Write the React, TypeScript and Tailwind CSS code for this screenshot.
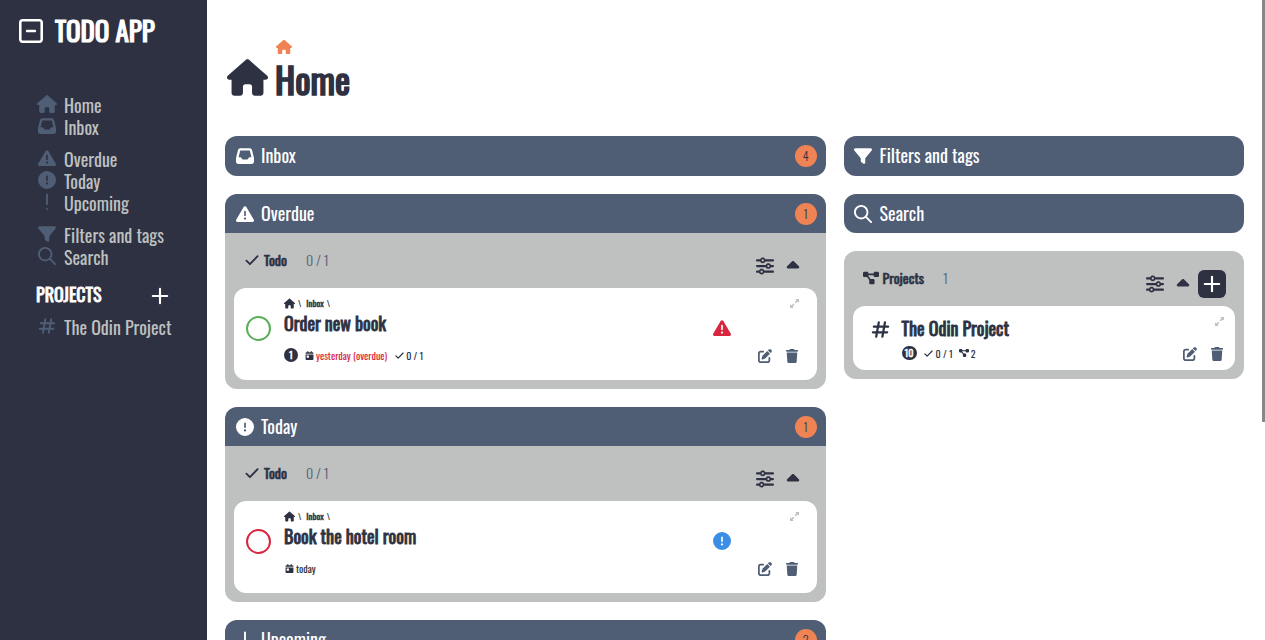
import type { ReactNode } from "react";
import {
  FaCalendarDay,
  FaCaretUp,
  FaCircleExclamation,
  FaDiagramProject,
  FaFilter,
  FaHouse,
  FaInbox,
  FaPenToSquare,
  FaRegSquareMinus,
  FaSliders,
  FaTrash,
  FaTriangleExclamation,
  FaUpRightAndDownLeftFromCenter,
} from "react-icons/fa6";

const strong = "[-webkit-text-stroke:0.045em_currentColor]";

function Thin({ d, width = 2.1, className }: { d: string; width?: number; className: string }) {
  return (
    <svg
      viewBox="0 0 20 20"
      fill="none"
      stroke="currentColor"
      strokeWidth={width}
      strokeLinecap="round"
      strokeLinejoin="round"
      className={className}
      aria-hidden="true"
    >
      <path d={d} />
    </svg>
  );
}

const paths = {
  search: "M15 8a7 7 0 1 1-14 0a7 7 0 0 1 14 0zM13 13L19 19",
  bang: "M10 1.500V12.500M10 17.800v.01",
  hash: "M8.200 2.500L5.500 17.500M14.700 2.500L12 17.500M3 7h15M2 13h15",
  check: "M2 11l5 5L18 4.500",
  plus: "M10 2v16M2 10h16",
};

function NavLink({ icon, children }: { icon: ReactNode; children: ReactNode }) {
  return (
    <li>
      <a href="#" className="flex h-[22px] items-center gap-[7px] text-lg/[22px] text-[#bfc0c0]">
        <span className="flex w-5 justify-center pb-0.5 text-[#4f5d75]">{icon}</span>
        {children}
      </a>
    </li>
  );
}

type BarProps = { icon: ReactNode; title: string; count?: number; slim?: boolean; open?: boolean };

function Bar({ icon, title, count, slim, open }: BarProps) {
  return (
    <h2
      className={`flex items-center gap-[7px] bg-[#4f5d75] pr-[9px] pl-2.5 text-lg text-white ${
        slim ? "h-[39px]" : "h-10"
      } ${open ? "rounded-t-xl" : "rounded-xl"}`}
    >
      <span className="flex w-[19px] justify-center">{icon}</span>
      <span className="pb-0.5">{title}</span>
      {count !== undefined && (
        <span className="ml-auto flex size-[22px] items-center justify-center rounded-full bg-[#ef8354] text-xs font-light text-[#2d3142]">
          {count}
        </span>
      )}
    </h2>
  );
}

function ListHead({ icon, title, count, add }: { icon: ReactNode; title: string; count: string; add?: boolean }) {
  return (
    <div className="flex h-[55px] items-center pr-[9px]">
      <div className="flex items-center pb-px">
        {icon}
        <h3 className={`text-sm ${strong}`}>{title}</h3>
        <span className="ml-[19px] text-sm font-light text-[#4f5d75]">{count}</span>
      </div>
      <div className="ml-auto flex items-center gap-[11px] pt-2.5">
        <button aria-label="Options">
          <FaSliders className="size-[18px]" />
        </button>
        <button aria-label="Collapse" className={add ? "-mr-1" : "mr-[7px]"}>
          <FaCaretUp className="h-5 w-4" />
        </button>
        {add && (
          <button aria-label="Add project" className="flex size-7 items-center justify-center rounded-md bg-[#2d3142] text-white">
            <Thin d={paths.plus} width={2.4} className="size-[18px]" />
          </button>
        )}
      </div>
    </div>
  );
}

function Actions() {
  return (
    <div className="flex flex-col items-end justify-between">
      <button aria-label="Expand" className="pt-px text-[#bfc0c0]">
        <FaUpRightAndDownLeftFromCenter className="size-[9px]" />
      </button>
      <div className="flex gap-[13px] text-[#4f5d75]">
        <button aria-label="Edit">
          <FaPenToSquare className="size-3.5" />
        </button>
        <button aria-label="Delete">
          <FaTrash className="size-3.5" />
        </button>
      </div>
    </div>
  );
}

function TaskPanel(props: {
  icon: ReactNode;
  title: string;
  task: string;
  ring: string;
  status: ReactNode;
  meta: ReactNode;
}) {
  return (
    <section>
      <Bar icon={props.icon} title={props.title} count={1} slim open />
      <div className="rounded-b-xl bg-[#bfc0c0] px-[9px] pb-[9px]">
        <ListHead
          icon={<Thin d={paths.check} width={2.6} className="mr-[5px] ml-[11px] size-3.5" />}
          title="Todo"
          count="0 / 1"
        />
        <article className="flex rounded-xl bg-white pt-2.5 pr-[18px] pb-[17px] pl-3">
          <input
            type="checkbox"
            aria-label={props.task}
            className={`mt-[18px] mr-[13px] size-[25px] appearance-none rounded-full border-2 ${props.ring}`}
          />
          <div className="flex flex-1 flex-col">
            <nav className="flex h-2.5 items-center gap-[3px] text-[9px]/[10px]">
              <FaHouse className="size-[11px]" />
              <span>\</span>
              <a href="#" className={`pl-0.5 ${strong}`}>
                Inbox
              </a>
              <span>\</span>
            </nav>
            <h4 className={`mt-[3px] flex h-6 items-center text-lg/6 ${strong}`}>{props.task}</h4>
            <div className="mt-3 flex h-4 items-center text-[10px]">{props.meta}</div>
          </div>
          <span className="pt-[21px] pr-[27px]">{props.status}</span>
          <Actions />
        </article>
      </div>
    </section>
  );
}

function Pill({ children }: { children: ReactNode }) {
  return (
    <span className={`mr-[7px] flex h-3.5 min-w-3.5 items-center justify-center rounded-full bg-[#2d3142] px-[3px] text-[10px]/[14px] text-white ${strong}`}>
      {children}
    </span>
  );
}

export default function App() {
  return (
    <div className="flex h-screen bg-white font-['Oswald',sans-serif] text-[#2d3142]">
      <aside className="w-[207px] shrink-0 bg-[#2d3142]">
        <header className="flex h-[62px] items-center gap-3 pl-[19px] text-white">
          <button aria-label="Close menu">
            <FaRegSquareMinus className="h-7 w-6" />
          </button>
          <h1 className={`pb-0.5 text-[27px] ${strong}`}>TODO APP</h1>
        </header>
        <nav className="mt-8 pl-[37px]">
          <ul>
            <NavLink icon={<FaHouse className="size-5" />}>Home</NavLink>
            <NavLink icon={<FaInbox className="size-[18px]" />}>Inbox</NavLink>
          </ul>
          <ul className="mt-2.5">
            <NavLink icon={<FaTriangleExclamation className="size-[18px]" />}>Overdue</NavLink>
            <NavLink icon={<FaCircleExclamation className="size-[18px]" />}>Today</NavLink>
            <NavLink icon={<Thin d={paths.bang} className="size-[18px]" />}>Upcoming</NavLink>
          </ul>
          <ul className="mt-2.5">
            <NavLink icon={<FaFilter className="size-[18px]" />}>Filters and tags</NavLink>
            <NavLink icon={<Thin d={paths.search} className="size-[18px]" />}>Search</NavLink>
          </ul>
          <div className="mt-3.5 mb-2.5 -ml-px flex h-6 items-center justify-between pr-[38px] text-lg text-white">
            <h2 className={strong}>PROJECTS</h2>
            <button aria-label="Add project" className="pt-[3px]">
              <Thin d={paths.plus} width={2.4} className="size-[18px]" />
            </button>
          </div>
          <ul>
            <NavLink icon={<Thin d={paths.hash} className="size-[18px]" />}>The Odin Project</NavLink>
          </ul>
        </nav>
      </aside>

      <main className="flex-1 overflow-y-auto px-[18px] pt-9 [scrollbar-width:none]">
        <header className="mb-[31px] flex h-[69px] items-end gap-[7px] pl-0.5">
          <FaHouse className="mb-[9px] h-[37px] w-[41px]" />
          <div className="pb-0.5">
            <a href="#" aria-label="Home" className="block pl-px text-[#ef8354]">
              <FaHouse className="size-4" />
            </a>
            <h1 className={`text-4xl leading-[48px] ${strong}`}>Home</h1>
          </div>
        </header>
        <div className="grid grid-cols-[3fr_2fr] items-start gap-[18px]">
          <div className="flex flex-col gap-[18px]">
            <Bar icon={<FaInbox className="size-[18px]" />} title="Inbox" count={4} />
            <TaskPanel
              icon={<FaTriangleExclamation className="size-[18px]" />}
              title="Overdue"
              task="Order new book"
              ring="border-[#5aae56]"
              status={<FaTriangleExclamation className="size-[18px] text-[#d7263d]" />}
              meta={
                <>
                  <Pill>1</Pill>
                  <FaCalendarDay className="mr-0.5 size-[9px]" />
                  <span className="mr-2 text-[#d7263d]">yesterday (overdue)</span>
                  <Thin d={paths.check} width={2.6} className="mr-0.5 size-[9px]" />
                  <span>0 / 1</span>
                </>
              }
            />
            <TaskPanel
              icon={<FaCircleExclamation className="size-[18px]" />}
              title="Today"
              task="Book the hotel room"
              ring="border-[#d7263d]"
              status={<FaCircleExclamation className="size-[18px] text-[#3a8ee6]" />}
              meta={
                <>
                  <FaCalendarDay className="mr-0.5 ml-px size-[9px]" />
                  <span>today</span>
                </>
              }
            />
            <Bar icon={<Thin d={paths.bang} className="size-[18px]" />} title="Upcoming" count={2} slim open />
          </div>
          <div className="flex flex-col gap-[18px]">
            <Bar icon={<FaFilter className="size-[18px]" />} title="Filters and tags" />
            <Bar icon={<Thin d={paths.search} className="size-[18px]" />} title="Search" slim />
            <section className="rounded-xl bg-[#bfc0c0] px-[9px] pb-[9px]">
              <ListHead icon={<FaDiagramProject className="mr-1 ml-2.5 size-4" />} title="Projects" count="1" add />
              <article className="flex rounded-xl bg-white pt-2.5 pr-[11px] pb-[9px] pl-[18px]">
                <Thin d={paths.hash} width={2.4} className="mt-1 mr-3 size-[19px]" />
                <div className="flex-1">
                  <h4 className={`flex h-6 items-center text-lg/6 ${strong}`}>The Odin Project</h4>
                  <div className="mt-[5px] flex h-4 items-center text-[10px]">
                    <Pill>10</Pill>
                    <Thin d={paths.check} width={2.6} className="mr-[3px] size-[9px]" />
                    <span className="mr-1.5">0 / 1</span>
                    <FaDiagramProject className="mr-0.5 size-2.5" />
                    <span>2</span>
                  </div>
                </div>
                <Actions />
              </article>
            </section>
          </div>
        </div>
      </main>
      <div className="h-[66%] w-[3px] bg-[#888888]" />
    </div>
  );
}
